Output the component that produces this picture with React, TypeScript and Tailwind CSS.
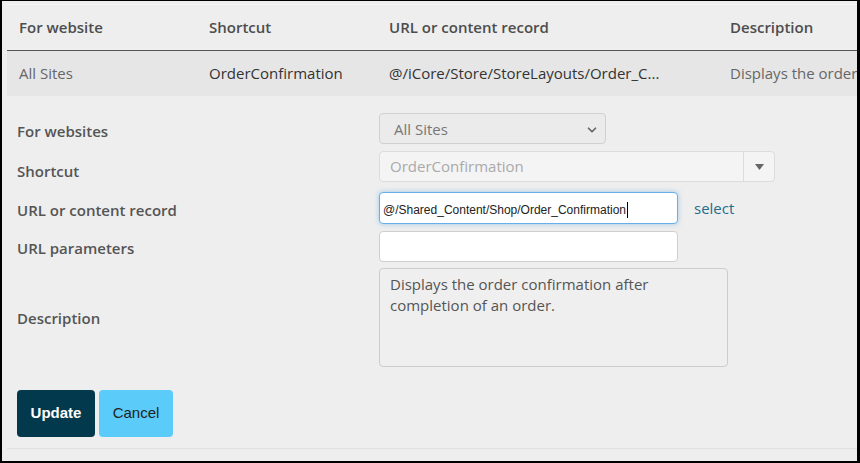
import { ChevronDown } from 'lucide-react';

const cols = 'grid grid-cols-[190px_180px_341px_1fr]';

function Label({ children, shift = 'pt-[5px]' }: { children: React.ReactNode; shift?: string }) {
  return <div className={`w-[362px] shrink-0 text-[15px] font-semibold text-[#555] ${shift}`}>{children}</div>;
}

export default function App() {
  return (
    <div
      className="h-[463px] w-[860px] overflow-hidden border-t border-b-2 border-l-2 border-r-[3px] border-black bg-[#eeeeee]"
      style={{ fontFamily: '"Open Sans", "Noto Sans", sans-serif' }}
    >
      {/* grid listing */}
      <div className="ml-[5px] mt-[3px] overflow-hidden border-t border-[#f6f6f6]">
        <div className={`${cols} h-[46px] items-center border-b border-[#555] text-[15px] font-semibold text-[#4d4d4d]`}>
          <div className="pl-3">For website</div>
          <div className="pl-3">Shortcut</div>
          <div className="pl-3">URL or content record</div>
          <div className="whitespace-nowrap pl-3">Description</div>
        </div>
        <div className={`${cols} h-[45px] items-center bg-[#e6e6e6] text-[15px]`}>
          <div className="pl-3 text-[#666]">All Sites</div>
          <div className="pl-3 text-[#333]">OrderConfirmation</div>
          <div className="pl-3 text-[#333]">@/iCore/Store/StoreLayouts/Order_C...</div>
          <div className="overflow-hidden whitespace-nowrap pl-3 text-[#666]">Displays the order</div>
        </div>
      </div>

      {/* edit form */}
      <div className="pl-[15px]">
        <div className="mt-[17px] flex h-[31px] items-center">
          <Label>For websites</Label>
          <div className="flex h-[31px] w-[227px] items-center justify-between rounded border border-[#d0d0d0] bg-[#ebebeb] pl-[14px] pr-[6px] pt-[2px] text-[15px] text-[#777]">
            <span>All Sites</span>
            <ChevronDown size={14} strokeWidth={3} className="text-[#666]" />
          </div>
        </div>

        <div className="mt-[7px] flex h-[31px] items-center">
          <Label shift="pt-[9px]">Shortcut</Label>
          <div className="flex h-[31px] w-[396px] items-center rounded border border-[#dcdcdc] bg-[#f4f4f4] text-[15px] text-[#aaa]">
            <span className="flex-1 pl-[10px]">OrderConfirmation</span>
            <div className="flex h-full w-[31px] items-center justify-center border-l border-[#dcdcdc]">
              <svg width="9" height="6" viewBox="0 0 9 6">
                <path d="M0 0 H9 L4.5 6 Z" fill="#666" />
              </svg>
            </div>
          </div>
        </div>

        <div className="mt-[10px] flex h-[32px] items-center">
          <Label shift="pt-[4px]">URL or content record</Label>
          <div
            className="flex h-[32px] w-[299px] items-center rounded border border-[#66afe9] bg-white pl-[3px] pt-[3px] text-[12px] text-[#222] shadow-[0_0_5px_rgba(102,175,233,0.6)]"
            style={{ fontFamily: '"Liberation Sans", Arial, sans-serif' }}
          >
            <span>@/Shared_Content/Shop/Order_Confirmation</span>
            <span className="ml-px h-[16px] w-px bg-black" />
          </div>
          <a className="ml-[16px] text-[15px] text-[#256c8c]">select</a>
        </div>

        <div className="mt-[7px] flex h-[31px] items-center">
          <Label shift="pt-[3px]">URL parameters</Label>
          <div className="h-[31px] w-[299px] rounded border border-[#cfcfcf] bg-white" />
        </div>

        <div className="mt-[6px] flex h-[99px] items-center">
          <Label shift="pt-[1px]">Description</Label>
          <div className="h-[99px] w-[349px] self-start rounded border border-[#cccccc] bg-[#efefef] px-[10px] pt-[5px] text-[15px] leading-[21px] text-[#555]">
            Displays the order confirmation after completion of an order.
          </div>
        </div>

        <div className="mt-[23px] flex gap-[4px]" style={{ fontFamily: '"Liberation Sans", Arial, sans-serif' }}>
          <button className="h-[47px] w-[78px] rounded bg-[#03394c] text-[15px] font-bold text-white">Update</button>
          <button className="h-[47px] w-[74px] rounded bg-[#5bcbf9] text-[15px] text-[#222]">Cancel</button>
        </div>
      </div>

      <div className="ml-[5px] mt-[11px] border-t border-[#e0e0e0]" />
    </div>
  );
}
